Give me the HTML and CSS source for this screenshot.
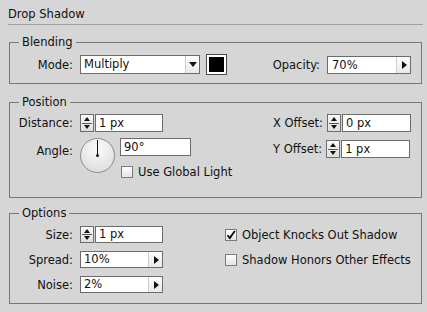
FILE: index.html
```html
<!DOCTYPE html>
<html lang="en">
<head>
    <meta charset="UTF-8">
    <title>Drop Shadow</title>
    <link rel="stylesheet" href="styles.css">
</head>
<body>
    <div class="panel">
        <div class="title">Drop Shadow</div>

        <fieldset class="group blending">
            <legend>Blending</legend>
            <div class="row">
                <label class="lbl">Mode:</label>
                <div class="select mode"><span class="val">Multiply</span><span class="btn"><i class="arrow-down"></i></span></div>
                <div class="swatch"></div>
                <label class="lbl grow">Opacity:</label>
                <div class="select opacity"><span class="val">70%</span><span class="btn"><i class="arrow-right"></i></span></div>
            </div>
        </fieldset>

        <fieldset class="group position">
            <legend>Position</legend>
            <div class="cols">
                <div class="col">
                    <div class="row r18">
                        <label class="lbl">Distance:</label>
                        <div class="spin"><i class="up"></i><b class="mid"></b><i class="down"></i></div>
                        <div class="field num">1 px</div>
                    </div>
                    <div class="row angle-row">
                        <label class="lbl angle-lbl">Angle:</label>
                        <div class="dial"></div>
                        <div class="angle-side">
                            <div class="field angle">90°</div>
                            <div class="check-row"><span class="check"></span>Use Global Light</div>
                        </div>
                    </div>
                </div>
                <div class="col right">
                    <div class="row r18">
                        <label class="lbl">X Offset:</label>
                        <div class="spin"><i class="up"></i><b class="mid"></b><i class="down"></i></div>
                        <div class="field off">0 px</div>
                    </div>
                    <div class="row r18 second">
                        <label class="lbl">Y Offset:</label>
                        <div class="spin"><i class="up"></i><b class="mid"></b><i class="down"></i></div>
                        <div class="field off">1 px</div>
                    </div>
                </div>
            </div>
        </fieldset>

        <fieldset class="group options">
            <legend>Options</legend>
            <div class="opt-grid">
                <div class="row">
                    <label class="lbl">Size:</label>
                    <div class="spin"><i class="up"></i><b class="mid"></b><i class="down"></i></div>
                    <div class="field num">1 px</div>
                </div>
                <div class="check-row"><span class="check on">
                    <svg width="10" height="10" viewBox="0 0 10 10"><path d="M1.5 5.2 L3.8 8 L8.8 1" fill="none" stroke="#000" stroke-width="1.8"/></svg>
                </span>Object Knocks Out Shadow</div>
                <div class="row">
                    <label class="lbl">Spread:</label>
                    <div class="select short"><span class="val">10%</span><span class="btn"><i class="arrow-right"></i></span></div>
                </div>
                <div class="check-row"><span class="check"></span>Shadow Honors Other Effects</div>
                <div class="row">
                    <label class="lbl">Noise:</label>
                    <div class="select short"><span class="val">2%</span><span class="btn"><i class="arrow-right"></i></span></div>
                </div>
            </div>
        </fieldset>
    </div>
</body>
</html>
```

FILE: styles.css
```css
body {
    margin: 0;
    background: #d6d6d6;
    font-family: "DejaVu Sans", sans-serif;
    font-size: 11.5px;
    color: #111;
}
.panel {
    width: 427px;
    height: 312px;
}
.title {
    margin: 0 4px 0 8px;
    padding-top: 7px;
    height: 17px;
    line-height: 14px;
    font-size: 11.5px;
    border-bottom: 1px solid #a2a2a2;
}
.group {
    margin: 0 5px 0 9px;
    padding: 5px 10px 8px 0;
    border: 1px solid #777;
    min-width: 0;
}
.group legend {
    margin-left: 9px;
    padding: 0 3px;
    line-height: 14px;
    font-size: 11.5px;
}
.blending {
    margin-top: 10px;
}
.position {
    margin-top: 11px;
    padding-bottom: 18px;
}
.options {
    margin-top: 8px;
    padding-top: 6px;
    padding-bottom: 10px;
}
.row {
    display: flex;
    align-items: center;
    height: 21px;
}
.r18 {
    height: 18px;
}
.lbl {
    width: 63px;
    margin-right: 7px;
    text-align: right;
    white-space: nowrap;
}
.lbl.grow {
    flex: 1;
    width: auto;
}
.select {
    display: flex;
    box-sizing: border-box;
    height: 19px;
    border: 1px solid #6c6c6c;
    background: #fff;
}
.select .val {
    flex: 1;
    padding-left: 3px;
    line-height: 17px;
}
.select .btn {
    width: 13px;
    border-left: 1px solid #cdcdcd;
    background: linear-gradient(#fdfdfd, #e9e9e9);
    display: flex;
    align-items: center;
    justify-content: center;
}
.mode {
    width: 120px;
}
.opacity {
    width: 84px;
    height: 18px;
}
.short {
    width: 83px;
    height: 17px;
}
.short .val {
    line-height: 15px;
}
.opacity .val {
    line-height: 16px;
    padding-left: 4px;
}
.arrow-down {
    width: 0;
    height: 0;
    border-left: 4px solid transparent;
    border-right: 4px solid transparent;
    border-top: 5px solid #111;
}
.arrow-right {
    width: 0;
    height: 0;
    border-top: 4px solid transparent;
    border-bottom: 4px solid transparent;
    border-left: 5px solid #111;
    margin-left: 1px;
}
.swatch {
    box-sizing: border-box;
    width: 21px;
    height: 21px;
    margin-left: 6px;
    border: 1px solid #4a4a4a;
    background: #000;
    box-shadow: inset 0 0 0 2px #fff;
}
.spin {
    box-sizing: border-box;
    width: 14px;
    height: 18px;
    margin-right: 1px;
    border: 1px solid #6c6c6c;
    background: linear-gradient(#fafafa, #dedede);
    display: flex;
    flex-direction: column;
    align-items: center;
    justify-content: space-between;
    padding: 2px 0;
}
.spin .up {
    width: 0;
    height: 0;
    border-left: 3.5px solid transparent;
    border-right: 3.5px solid transparent;
    border-bottom: 4px solid #111;
}
.spin .down {
    width: 0;
    height: 0;
    border-left: 3.5px solid transparent;
    border-right: 3.5px solid transparent;
    border-top: 4px solid #111;
}
.spin .mid {
    width: 10px;
    height: 1px;
    background: #555;
}
.field {
    box-sizing: border-box;
    height: 18px;
    line-height: 16px;
    padding-left: 3px;
    border: 1px solid #6c6c6c;
    background: #fff;
}
.num {
    width: 68px;
}
.off {
    width: 69px;
}
.angle {
    width: 71px;
}
.cols {
    display: flex;
    justify-content: space-between;
}
.col.right .lbl {
    width: auto;
    margin-right: 4px;
}
.second {
    margin-top: 8px;
}
.angle-row {
    height: auto;
    align-items: flex-start;
    margin-top: 6px;
}
.angle-lbl {
    margin-top: 6px;
}
.dial {
    position: relative;
    box-sizing: border-box;
    width: 35px;
    height: 35px;
    border-radius: 50%;
    border: 1px solid #8c8c8c;
    background: radial-gradient(circle at 50% 30%, #fbfbfb, #e2e2e2 70%, #d2d2d2);
}
.dial::before {
    content: "";
    position: absolute;
    left: 16px;
    top: 1px;
    width: 1px;
    height: 16px;
    background: #111;
}
.dial::after {
    content: "";
    position: absolute;
    left: 15px;
    top: 15px;
    width: 3px;
    height: 3px;
    border-radius: 50%;
    background: #111;
}
.angle-side {
    margin-left: 5px;
}
.check-row {
    display: flex;
    align-items: center;
    white-space: nowrap;
}
.angle-side .check-row {
    margin-top: 9px;
    margin-left: 1px;
    height: 14px;
}
.check {
    box-sizing: border-box;
    width: 12px;
    height: 12px;
    margin-right: 5px;
    border: 1px solid #7c7c7c;
    background: linear-gradient(#ffffff, #e3e3e3);
    display: flex;
    align-items: center;
    justify-content: center;
}
.opt-grid {
    display: grid;
    grid-template-columns: 215px 1fr;
    grid-template-rows: 17px 17px 17px;
    row-gap: 8px;
}
.opt-grid .row {
    height: 17px;
}
.opt-grid .field {
    height: 17px;
    line-height: 15px;
}
.opt-grid .spin {
    height: 17px;
}
```
